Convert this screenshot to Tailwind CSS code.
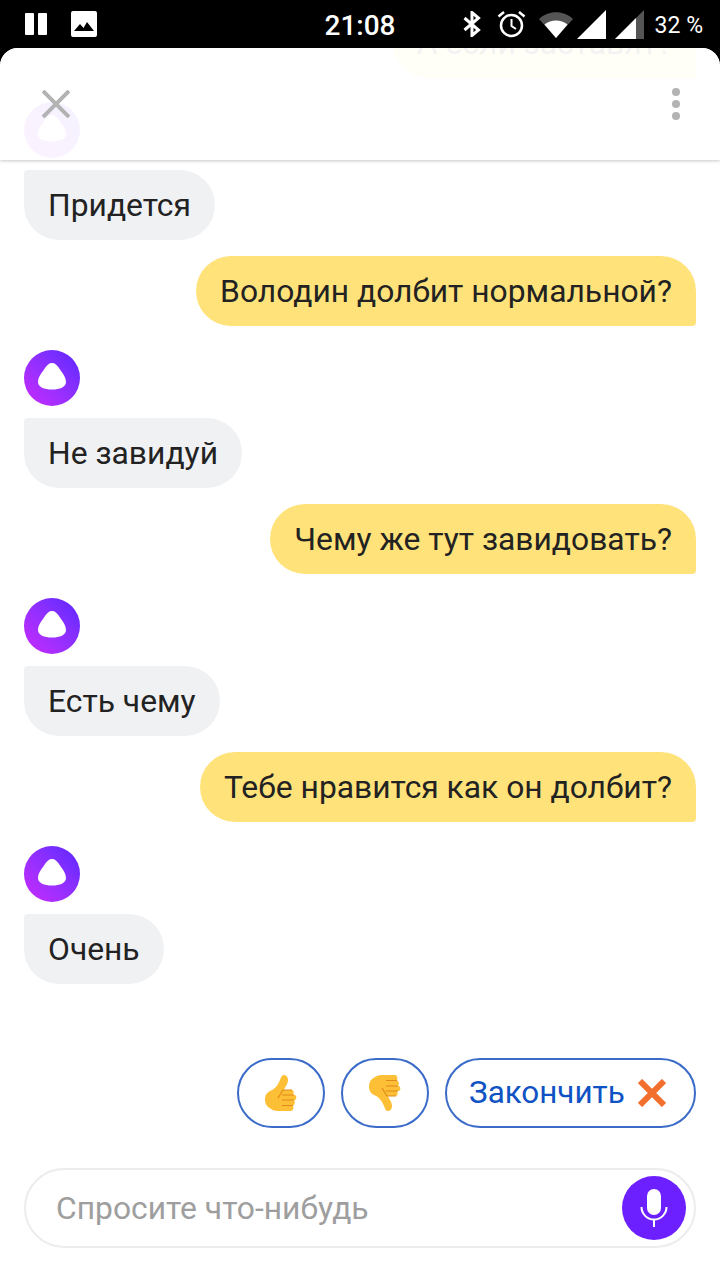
<!DOCTYPE html>
<html>
  <head>
    <meta charset="UTF-8" />
    <title>chat</title>
    <script src="https://cdn.jsdelivr.net/npm/@tailwindcss/browser@4"></script>
  </head>
  <body class="bg-black font-['Roboto',sans-serif]">
    <div class="w-[720px] h-[1280px] flex flex-col bg-black overflow-hidden">
      <!-- status bar -->
      <div class="h-[48px] shrink-0 flex items-center justify-between text-white">
        <div class="w-[325px] flex items-center pl-[25px]">
          <div class="w-[9px] h-[22px] bg-white rounded-[1px]"></div>
          <div class="w-[9px] h-[22px] bg-white rounded-[1px] ml-[4px]"></div>
          <svg class="ml-[24px]" width="26" height="26" viewBox="0 0 26 26"><rect width="26" height="26" rx="2" fill="#fff"/><path d="M3 20l6-7 3.500 4 3.500-6 7 9z" fill="#000"/></svg>
        </div>
        <div class="text-[28px] font-medium leading-none mt-[4px]">21:08</div>
        <div class="w-[325px] flex items-center justify-end pr-[17px]">
          <svg class="shrink-0" width="18" height="26" viewBox="0 0 18 26" fill="none" stroke="#fff" stroke-width="3"><path d="M1.500 7l14 12-6.500 5.500V1.500L15.500 7l-14 12"/></svg>
          <svg class="shrink-0 ml-[16px]" width="29" height="28" viewBox="0 0 29 28" fill="none" stroke="#fff"><circle cx="14.500" cy="15.500" r="10.500" stroke-width="2.500"/><path d="M14.500 9v7l4.500 3" stroke-width="2"/><path d="M1.500 6.500L7 2M27.500 6.500L22 2" stroke-width="2.500"/></svg>
          <svg class="shrink-0 ml-[13px]" width="34" height="28" viewBox="0 0 34 28"><path d="M0 9C9 0 25 0 34 9L17 28z" fill="#555"/><path d="M5.500 14.500C12 9 22 9 28.500 14.500L17 28z" fill="#fff"/></svg>
          <svg class="shrink-0 ml-[4px]" width="29" height="29" viewBox="0 0 29 29"><path d="M0 29L29 0v29z" fill="#fff"/></svg>
          <svg class="shrink-0 ml-[9px]" width="29" height="29" viewBox="0 0 29 29"><path d="M0 29L29 0v29z" fill="#555"/><path d="M0 29l21-21v21z" fill="#fff"/></svg>
          <span class="shrink-0 ml-[11px] text-[23px] leading-none mt-[3px]">32 %</span>
        </div>
      </div>

      <!-- sheet -->
      <div class="relative flex-1 min-h-0 flex flex-col bg-white rounded-t-[18px] overflow-hidden">
        <div class="absolute top-0 left-0 right-0 h-[112px] bg-white/94 shadow-[0_1px_3px_rgba(0,0,0,0.22)] z-10">
          <svg class="absolute left-[42px] top-[42px]" width="28" height="28" viewBox="0 0 28 28" stroke="#b3b3b3" stroke-width="4"><path d="M1 1l26 26M27 1L1 27"/></svg>
          <div class="absolute left-[672px] top-[40px] flex flex-col gap-[4px]">
            <div class="w-[8px] h-[8px] rounded-full bg-[#b3b3b3]"></div>
            <div class="w-[8px] h-[8px] rounded-full bg-[#b3b3b3]"></div>
            <div class="w-[8px] h-[8px] rounded-full bg-[#b3b3b3]"></div>
          </div>
        </div>

        <!-- messages, pinned to the bottom -->
        <div class="flex-1 min-h-0 flex flex-col justify-end px-[24px] text-[31.8px] leading-[70px] text-[#222]">
          <div class="self-end h-[70px] px-[24px] bg-[#ffe37a] rounded-[35px] rounded-br-[4px] whitespace-nowrap">А если заставят?</div>
          <div class="mt-[24px] w-[56px] h-[56px] rounded-full bg-linear-to-tr from-[#c926ff] to-[#5a24ff]">
            <svg width="56" height="56" viewBox="0 0 56 56"><path d="M28 13C31 13 33 15 35 18C38 22.500 42 27 42 32C42 37 36 39.500 28 39.500C20 39.500 14 37 14 32C14 27 18 22.500 21 18C23 15 25 13 28 13Z" fill="#fff"/></svg>
          </div>
          <div class="mt-[12px] self-start h-[70px] px-[24px] bg-[#f0f1f3] rounded-[35px] rounded-tl-[4px] whitespace-nowrap">Придется</div>
          <div class="mt-[16px] self-end h-[70px] px-[24px] bg-[#ffe37a] rounded-[35px] rounded-br-[4px] whitespace-nowrap">Володин долбит нормальной?</div>
          <div class="mt-[24px] w-[56px] h-[56px] rounded-full bg-linear-to-tr from-[#c926ff] to-[#5a24ff]">
            <svg width="56" height="56" viewBox="0 0 56 56"><path d="M28 13C31 13 33 15 35 18C38 22.500 42 27 42 32C42 37 36 39.500 28 39.500C20 39.500 14 37 14 32C14 27 18 22.500 21 18C23 15 25 13 28 13Z" fill="#fff"/></svg>
          </div>
          <div class="mt-[12px] self-start h-[70px] px-[24px] bg-[#f0f1f3] rounded-[35px] rounded-tl-[4px] whitespace-nowrap">Не завидуй</div>
          <div class="mt-[16px] self-end h-[70px] px-[24px] bg-[#ffe37a] rounded-[35px] rounded-br-[4px] whitespace-nowrap">Чему же тут завидовать?</div>
          <div class="mt-[24px] w-[56px] h-[56px] rounded-full bg-linear-to-tr from-[#c926ff] to-[#5a24ff]">
            <svg width="56" height="56" viewBox="0 0 56 56"><path d="M28 13C31 13 33 15 35 18C38 22.500 42 27 42 32C42 37 36 39.500 28 39.500C20 39.500 14 37 14 32C14 27 18 22.500 21 18C23 15 25 13 28 13Z" fill="#fff"/></svg>
          </div>
          <div class="mt-[12px] self-start h-[70px] px-[24px] bg-[#f0f1f3] rounded-[35px] rounded-tl-[4px] whitespace-nowrap">Есть чему</div>
          <div class="mt-[16px] self-end h-[70px] px-[24px] bg-[#ffe37a] rounded-[35px] rounded-br-[4px] whitespace-nowrap">Тебе нравится как он долбит?</div>
          <div class="mt-[24px] w-[56px] h-[56px] rounded-full bg-linear-to-tr from-[#c926ff] to-[#5a24ff]">
            <svg width="56" height="56" viewBox="0 0 56 56"><path d="M28 13C31 13 33 15 35 18C38 22.500 42 27 42 32C42 37 36 39.500 28 39.500C20 39.500 14 37 14 32C14 27 18 22.500 21 18C23 15 25 13 28 13Z" fill="#fff"/></svg>
          </div>
          <div class="mt-[12px] self-start h-[70px] px-[24px] bg-[#f0f1f3] rounded-[35px] rounded-tl-[4px] whitespace-nowrap">Очень</div>
        </div>

        <!-- suggestions -->
        <div class="mt-[74px] px-[24px] flex justify-end gap-[16px]">
          <div class="w-[88px] h-[70px] rounded-[35px] border-2 border-[#3a6bc9] flex items-center justify-center">
            <svg width="32" height="36" viewBox="0 0 32 36"><path d="M19 0C22 0 23 3 23 5C23 9 20 12 19 15H27C29 15 29 19 28 20H29.500C32 20 32 25 29.500 25H29C30.500 27 30 30 28 30.500C29 33 28 36 26 36H16C12 36 9 36 6 34C2 32 0 29 0 25C0 21 1 18 5 16C10 14 13 10 15 5C16 2 17 0 19 0Z" fill="#fdbf35"/><path d="M18 15H27M17 20H29M17 25H29M17 30.500H28M18 15L13 23" fill="none" stroke="#e08a1e" stroke-width="1.200"/></svg>
          </div>
          <div class="w-[88px] h-[70px] rounded-[35px] border-2 border-[#3a6bc9] flex items-center justify-center">
            <svg width="32" height="36" viewBox="0 0 32 36"><g transform="matrix(1 0 0 -1 0 36)"><path d="M19 0C22 0 23 3 23 5C23 9 20 12 19 15H27C29 15 29 19 28 20H29.500C32 20 32 25 29.500 25H29C30.500 27 30 30 28 30.500C29 33 28 36 26 36H16C12 36 9 36 6 34C2 32 0 29 0 25C0 21 1 18 5 16C10 14 13 10 15 5C16 2 17 0 19 0Z" fill="#fdbf35"/><path d="M18 15H27M17 20H29M17 25H29M17 30.500H28M18 15L13 23" fill="none" stroke="#e08a1e" stroke-width="1.200"/></g></svg>
          </div>
          <div class="w-[251px] h-[70px] pl-[22px] rounded-[35px] border-2 border-[#3a6bc9] flex items-center text-[31.4px] text-[#0f52c4] whitespace-nowrap">
            Закончить
            <svg class="ml-[13px]" width="28" height="28" viewBox="0 0 28 28" stroke="#f26f2e" stroke-width="6"><path d="M2 2l24 24M26 2L2 26"/></svg>
          </div>
        </div>

        <!-- input -->
        <div class="mt-[40px] mb-[32px] mx-[24px] h-[80px] rounded-[40px] border-2 border-[#ececec] flex items-center justify-between pl-[30px] pr-[8px]">
          <span class="mt-[2px] text-[31.8px] text-[#9e9e9e]">Спросите что-нибудь</span>
          <div class="w-[64px] h-[64px] rounded-full bg-[#6c1fff] flex items-center justify-center">
            <svg width="28" height="38" viewBox="0 0 28 38" fill="none"><rect x="7" y="0" width="14" height="26" rx="7" fill="#fff"/><path d="M1.500 18a12.500 12.500 0 0 0 25 0M14 31v7" stroke="#fff" stroke-width="2"/></svg>
          </div>
        </div>
      </div>
    </div>
  </body>
</html>
